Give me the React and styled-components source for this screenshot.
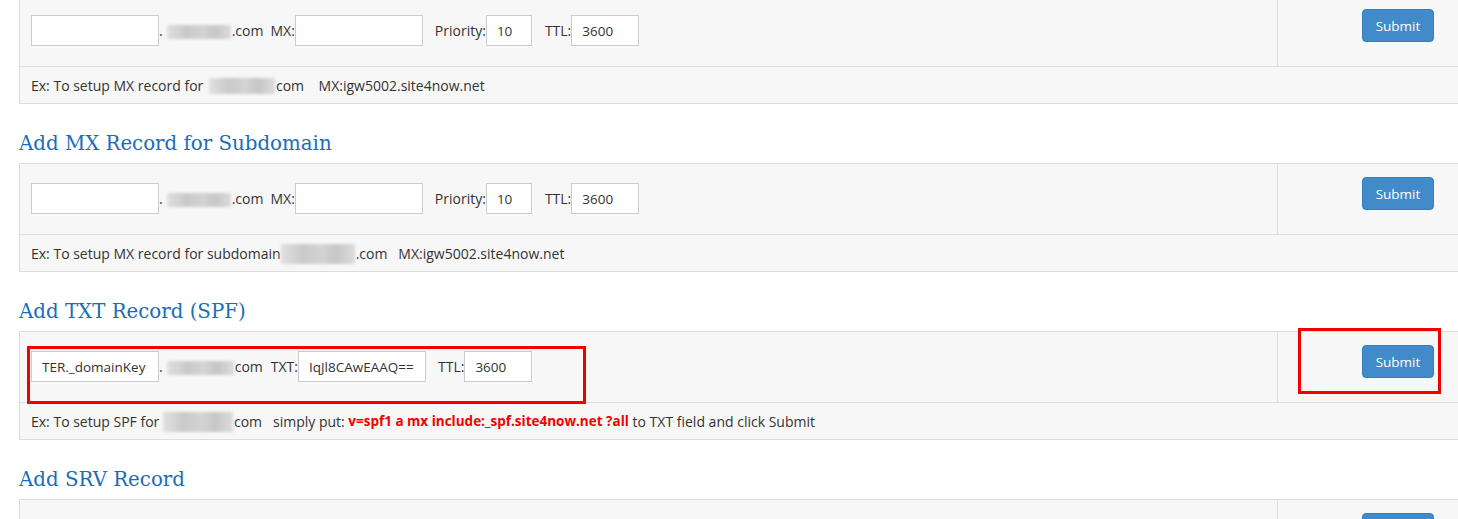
import React from 'react'
import styled, { createGlobalStyle } from 'styled-components'

const GlobalStyle = createGlobalStyle`
	html, body {
		margin: 0;
		padding: 0;
		background: #fff;
		overflow: hidden;
	}
	body {
		font-family: 'Open Sans', 'Liberation Sans', sans-serif;
		font-size: 14px;
		color: #333;
	}
`

const Page = styled.div`
	width: 1480px;
	margin-top: -5px;
	padding-left: 19px;
`

const Heading = styled.h3`
	margin: 30px 0 10px;
	font-family: 'DejaVu Serif', 'Liberation Serif', serif;
	font-weight: normal;
	font-size: 19.8px;
	line-height: 19px;
	color: #1b6db6;
`

const Table = styled.div`
	position: relative;
	background: #f7f7f7;
	border: 1px solid #ddd;
	border-right: none;
`

const MainRow = styled.div`
	display: grid;
	grid-template-columns: 1258px 1fr;
	height: 70px;
`

const FieldCell = styled.div`
	display: flex;
	align-items: center;
	padding: 19px 11px 20px;
	border-right: 1px solid #ddd;
	height: 31px;
`

const ActionCell = styled.div`
	padding: 13px 0 0 84px;
`

const NoteRow = styled.div`
	display: flex;
	align-items: center;
	height: 36px;
	padding-left: 11px;
	border-top: 1px solid #ddd;
	white-space: pre;
`

const Input = styled.input`
	box-sizing: border-box;
	width: ${({ $w }) => $w}px;
	height: 31px;
	padding: 0 10px;
	border: 1px solid #ccc;
	background: #fff;
	font-family: inherit;
	font-size: 13.5px;
	color: #333;
	outline: none;
`

const Label = styled.span`
	margin-left: ${({ $gap }) => $gap || 0}px;
	white-space: pre;
`

const Blur = styled.span`
	display: inline-block;
	width: ${({ $w }) => $w}px;
	height: ${({ $h }) => $h || 14}px;
	margin: ${({ $dy }) => $dy || 2}px 1px 0 ${({ $ml }) => $ml || 0}px;
	background: linear-gradient(90deg, #e0e0e0, #c9c9c9 30%, #d3d3d3 55%, #c6c6c6 75%, #dcdcdc);
	filter: blur(1.5px);
`

const SubmitButton = styled.button`
	width: 72px;
	height: 33px;
	background: #428bca;
	border: 1px solid #357ebd;
	border-radius: 4px;
	color: #fff;
	font-family: 'Open Sans', 'Liberation Sans', sans-serif;
	font-size: 13.5px;
	padding: 0;
`

const Highlight = styled.div`
	position: absolute;
	top: ${({ $top }) => $top}px;
	left: ${({ $left }) => $left}px;
	width: ${({ $w }) => $w}px;
	height: ${({ $h }) => $h}px;
	box-sizing: border-box;
	border: 3px solid #f20000;
	pointer-events: none;
`

const Red = styled.b`
	color: #f40000;
	font-weight: 700;
	font-size: 13.5px;
`

const MxFields = () => (
	<>
		<Input $w={128} />
		<Label>.</Label>
		<Blur $w={64} $ml={4} />
		<Label>.com</Label>
		<Label $gap={7}>MX:</Label>
		<Input $w={128} />
		<Label $gap={12}>Priority:</Label>
		<Input $w={46} defaultValue="10" />
		<Label $gap={13}>TTL:</Label>
		<Input $w={68} defaultValue="3600" />
	</>
)

const Section = ({ title, fields, note, children }) => (
	<>
		{title && <Heading>{title}</Heading>}
		<Table>
			<MainRow>
				<FieldCell>{fields}</FieldCell>
				<ActionCell>
					<SubmitButton>Submit</SubmitButton>
				</ActionCell>
			</MainRow>
			{note && <NoteRow>{note}</NoteRow>}
			{children}
		</Table>
	</>
)

export default function App() {
	return (
		<>
			<GlobalStyle />
			<Page>
				<Section
					fields={<MxFields />}
					note={
						<>
							Ex: To setup MX record for <Blur $w={66} $h={16} $ml={2} />
							com    MX:igw5002.site4now.net
						</>
					}
				/>

				<Section
					title="Add MX Record for Subdomain"
					fields={<MxFields />}
					note={
						<>
							Ex: To setup MX record for subdomain
							<Blur $w={74} $h={20} />
							.com   MX:igw5002.site4now.net
						</>
					}
				/>

				<Section
					title="Add TXT Record (SPF)"
					fields={
						<>
							<Input $w={128} defaultValue="TER._domainKey" />
							<Label>.</Label>
							<Blur $w={67} $ml={4} />
							<Label>com</Label>
							<Label $gap={8}>TXT:</Label>
							<Input $w={128} defaultValue="IqJl8CAwEAAQ==" />
							<Label $gap={12}>TTL:</Label>
							<Input $w={68} defaultValue="3600" />
						</>
					}
					note={
						<>
							Ex: To setup SPF for <Blur $w={70} $h={20} />
							com   simply put: <Red>v=spf1 a mx include:_spf.site4now.net ?all</Red> to TXT field and click Submit
						</>
					}
				>
					<Highlight $top={14} $left={7} $w={559} $h={58} />
					<Highlight $top={-4} $left={1278} $w={143} $h={66} />
				</Section>

				<Section
					title="Add SRV Record"
					fields={
						<>
							<Input $w={128} />
							<Input $w={128} />
						</>
					}
				/>
			</Page>
		</>
	)
}
